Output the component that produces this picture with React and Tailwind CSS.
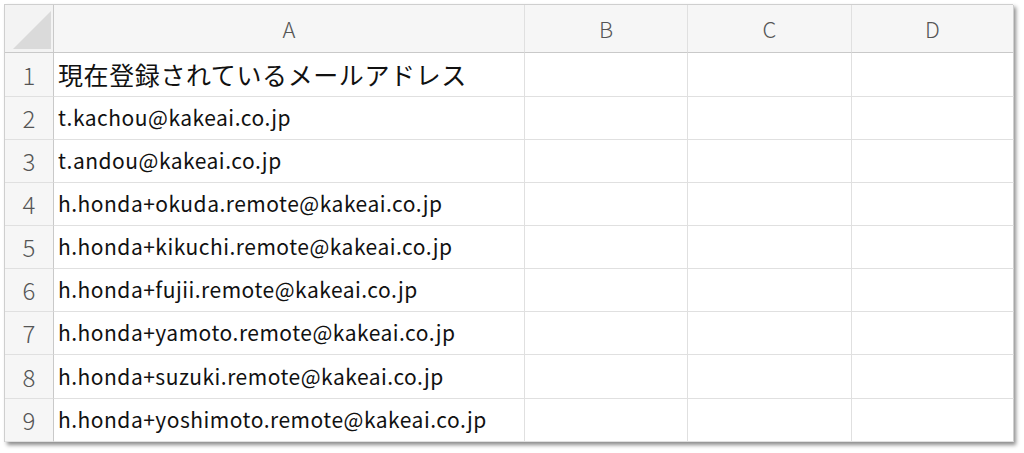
import React from 'react'

const cols = ['A', 'B', 'C', 'D']
const rows = [
  '現在登録されているメールアドレス',
  't.kachou@kakeai.co.jp',
  't.andou@kakeai.co.jp',
  'h.honda+okuda.remote@kakeai.co.jp',
  'h.honda+kikuchi.remote@kakeai.co.jp',
  'h.honda+fujii.remote@kakeai.co.jp',
  'h.honda+yamoto.remote@kakeai.co.jp',
  'h.honda+suzuki.remote@kakeai.co.jp',
  'h.honda+yoshimoto.remote@kakeai.co.jp',
]

export default function App() {
  return (
    <div
      className="w-[1024px] h-[453px] bg-white pt-[4px] pl-[4px]"
      style={{ fontFamily: '"Noto Sans CJK JP", "Noto Sans", sans-serif' }}
    >
      <div className="w-[1009px] grid grid-cols-[49px_471px_163px_164px_162px] grid-rows-[48px_44px_43px_43px_43px_43px_43px_43px_44px_43px] border-t border-l border-[#cfcfcf] shadow-[3px_3px_4px_rgba(0,0,0,0.45)]">
        <div className="bg-[#f3f3f3] border-r border-b border-[#c9c9c9] flex items-end justify-end pr-[2px] pb-[3px]">
          <svg width="38" height="38" viewBox="0 0 38 38">
            <polygon points="0,38 38,0 38,38" fill="#dadada" />
          </svg>
        </div>
        {cols.map((c, i) => (
          <div
            key={c}
            className={`bg-[#f6f6f6] border-b border-[#c9c9c9] flex items-center justify-center text-[22px] font-light text-[#555] ${i < 3 ? 'border-r border-r-[#e0e0e0]' : 'border-r border-r-[#cfcfcf]'}`}
          >
            {c}
          </div>
        ))}
        {rows.map((t, r) => (
          <React.Fragment key={r}>
            <div className="bg-[#f6f6f6] border-r border-b border-r-[#c9c9c9] border-b-[#e0e0e0] flex items-center justify-center text-[24px] font-light text-[#555]">
              {r + 1}
            </div>
            <div
              className={`border-r border-b border-[#e0e0e0] flex items-center pl-[4px] whitespace-nowrap text-[#111] ${r === 0 ? 'text-[25px] tracking-[0.6px]' : 'text-[21px] tracking-[0.5px]'}`}
            >
              {t}
            </div>
            <div className="border-r border-b border-[#e0e0e0]" />
            <div className="border-r border-b border-[#e0e0e0]" />
            <div className="border-r border-b border-[#e0e0e0] border-r-[#cfcfcf]" />
          </React.Fragment>
        ))}
      </div>
    </div>
  )
}
